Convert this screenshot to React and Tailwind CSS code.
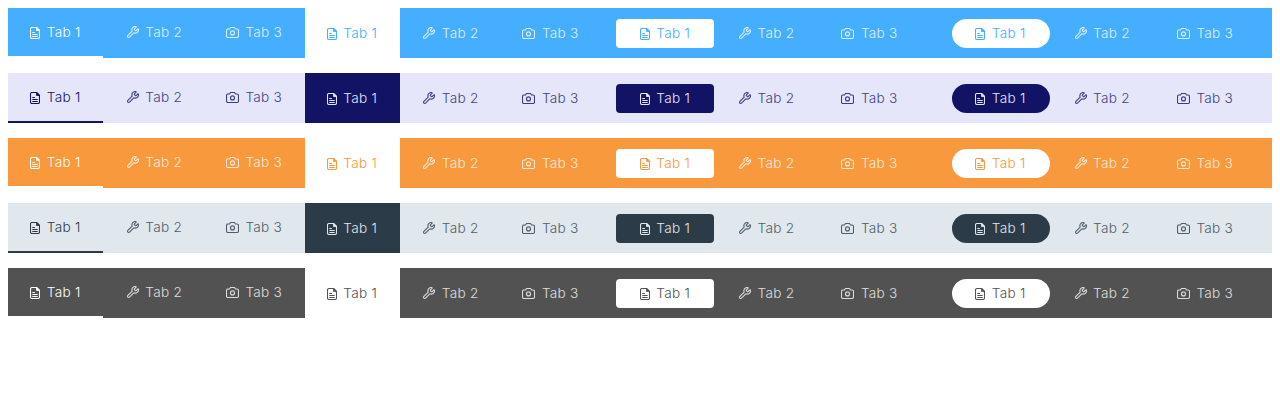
const themes = [
  { bar: "bg-[#45aeff]", ink: "text-white", line: "border-white", fill: "bg-white text-[#45aeff]" },
  { bar: "bg-[#e5e6fa]", ink: "text-[#131365]", line: "border-[#131365]", fill: "bg-[#131365] text-[#e5e6fa]" },
  { bar: "bg-[#f8993d]", ink: "text-white", line: "border-white", fill: "bg-white text-[#f8993d]" },
  { bar: "bg-[#e0e7ed]", ink: "text-[#2c3b48]", line: "border-[#2c3b48]", fill: "bg-[#2c3b48] text-[#e0e7ed]" },
  { bar: "bg-[#525252]", ink: "text-white", line: "border-white", fill: "bg-white text-[#525252]" },
];

const stroke = {
  fill: "none",
  stroke: "currentColor",
  strokeWidth: 1.1,
  strokeLinecap: "round",
  strokeLinejoin: "round",
};

function FileIcon() {
  return (
    <svg className="mt-px h-3 w-2.5 shrink-0" viewBox="0 0 10 12" {...stroke}>
      <path d="M6.5.5H2A1.5 1.5 0 0 0 .5 2v8A1.5 1.5 0 0 0 2 11.5h6A1.5 1.5 0 0 0 9.5 10V3.500Z" />
      <path d="M6.500.5V3.500H9.500Z" fill="currentColor" strokeWidth="0.8" />
      <path d="M2.700 5.500H4.500M2.700 7.500H7.300M2.700 9.500H7.300" strokeWidth="1" />
    </svg>
  );
}

function WrenchIcon() {
  return (
    <svg className="size-3 shrink-0" viewBox="1 1 22 22" {...stroke} strokeWidth={2}>
      <path d="M14.700 6.300a1 1 0 0 0 0 1.400l1.600 1.600a1 1 0 0 0 1.400 0l3.106-3.105c.32-.322.863-.22.983.218a6 6 0 0 1-8.259 7.057l-7.910 7.910a1 1 0 0 1-2.999-3l7.910-7.910a6 6 0 0 1 7.057-8.259c.438.12.54.662.219.984z" />
    </svg>
  );
}

function CameraIcon() {
  return (
    <svg className="h-[11px] w-[13px] shrink-0" viewBox="0 0 13 11" {...stroke}>
      <path d="M4.500.5H8.500L9.500 2H11A1.500 1.500 0 0 1 12.500 3.500V9A1.500 1.500 0 0 1 11 10.500H2A1.500 1.500 0 0 1 .5 9V3.500A1.500 1.500 0 0 1 2 2H3.500Z" />
      <circle cx="6.500" cy="5.900" r="2" />
    </svg>
  );
}

const tabs = [
  { label: "Tab 1", Icon: FileIcon, width: "w-[95px]", pill: "w-[98px]" },
  { label: "Tab 2", Icon: WrenchIcon, width: "w-[101.5px] pl-[1.5px]", pill: "w-[104.5px] pl-px" },
  { label: "Tab 3", Icon: CameraIcon, width: "w-[100px] pr-px", pill: "w-[103px] pr-px" },
];

function Tab({ tab, className }) {
  const { Icon, label } = tab;
  return (
    <button type="button" className={`flex items-center justify-center gap-[6.5px] ${className}`}>
      <Icon />
      <span>{label}</span>
    </button>
  );
}

function FlatTabs({ theme, underline }) {
  return (
    <div className="flex w-[296.5px]">
      {tabs.map((tab, i) => {
        const active = underline ? `border-b-2 ${theme.line}` : theme.fill;
        const idle = underline ? "border-b-2 border-transparent opacity-80" : "opacity-80";
        return <Tab key={tab.label} tab={tab} className={`${tab.width} ${i === 0 ? active : idle}`} />;
      })}
    </div>
  );
}

function PillTabs({ theme, radius }) {
  return (
    <div className="flex w-[335.5px] items-center px-[15px]">
      {tabs.map((tab, i) => (
        <Tab key={tab.label} tab={tab} className={`h-[29px] ${tab.pill} ${i === 0 ? `${theme.fill} ${radius}` : "opacity-80"}`} />
      ))}
    </div>
  );
}

export default function App() {
  return (
    <main className="flex flex-col gap-[15px] bg-white p-2 font-['Inter',sans-serif] text-[13.6px] leading-5 font-light tracking-[0.27px]">
      {themes.map((theme) => (
        <div key={theme.bar} className={`flex h-[50px] ${theme.bar} ${theme.ink}`}>
          <FlatTabs theme={theme} underline />
          <FlatTabs theme={theme} />
          <PillTabs theme={theme} radius="rounded" />
          <PillTabs theme={theme} radius="rounded-full" />
        </div>
      ))}
    </main>
  );
}
